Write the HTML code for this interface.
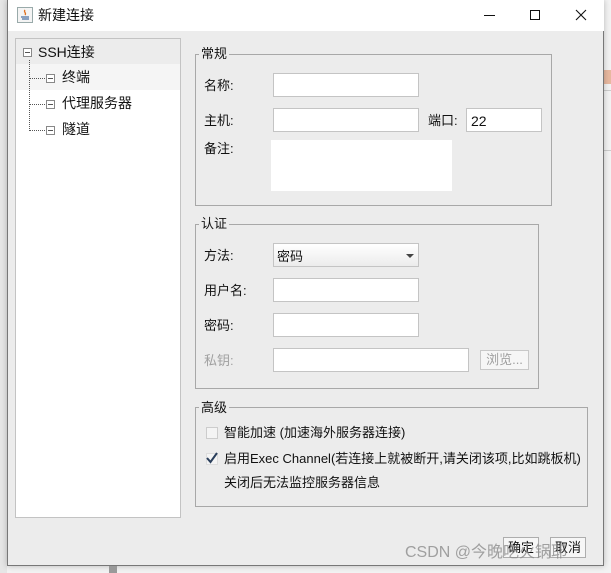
<!DOCTYPE html>
<html><head><meta charset="utf-8"><style>
*{margin:0;padding:0;box-sizing:border-box}
body{width:611px;height:573px;background:#f3f3f3;position:relative;overflow:hidden;font-family:"Liberation Sans","Microsoft YaHei","Noto Sans CJK SC",sans-serif;font-size:13px;color:#111}
.a{position:absolute}
#dlg{left:7px;top:0;width:597px;height:566px;background:#ececec;border:1px solid #777;border-top:none;box-shadow:0 0 6px rgba(0,0,0,.25)}
#tb{left:0;top:0;width:596px;height:31px;background:#fff}
.in{position:absolute;background:#fff;border:1px solid #c4c4c4}
.grp{position:absolute;border:1px solid #a8a8a8}
.gt{position:absolute;background:#ececec;padding:0 2px;font-size:13px;line-height:14px}
.lb{position:absolute;font-size:13px;line-height:14px}
.btn{position:absolute;border:1px solid #adadad;background:#f6f6f6;font-size:13px;text-align:center;line-height:19px}
.box{position:absolute;width:9px;height:9px;border:1px solid #888;background:#fff}
.box:after{content:"";position:absolute;left:1px;top:3px;width:5px;height:1px;background:#555}
</style></head><body>
<div class="a" style="left:0;top:0;width:7px;height:573px;background:#e6e6e6"></div>
<div class="a" style="left:604px;top:90px;width:7px;height:1px;background:#ccc"></div>
<div class="a" style="left:604px;top:150px;width:7px;height:1px;background:#ccc"></div>
<div class="a" style="left:604px;top:70px;width:7px;height:14px;background:#e8b9a0"></div>
<div id="dlg" class="a">
 <div id="tb" class="a">
  <svg class="a" style="left:9px;top:7px" width="16" height="16"><rect x="0.5" y="0.5" width="15" height="15" fill="#f4f4f4" stroke="#9aa"/><path d="M5 12h7M4 10h8" stroke="#4a6fa0" stroke-width="1.2"/><path d="M8 3c-2 2 2 3 0 5" stroke="#e07020" fill="none" stroke-width="1.3"/></svg>
  <div class="lb" style="left:30px;top:8px;font-size:14px">新建连接</div>
  <div class="a" style="left:476px;top:15px;width:11px;height:1px;background:#111"></div>
  <div class="a" style="left:522px;top:10px;width:10px;height:10px;border:1px solid #111"></div>
  <svg class="a" style="left:567px;top:9px" width="12" height="12"><path d="M1 1L11 11M11 1L1 11" stroke="#111" stroke-width="1.1"/></svg>
 </div>
</div>
<div class="a" style="left:15px;top:38px;width:166px;height:480px;background:#fff;border:1px solid #c3c3c3"></div>
<div class="a" style="left:16px;top:39px;width:164px;height:25px;background:#ececec"></div>
<div class="a" style="left:16px;top:64px;width:164px;height:26px;background:#f5f5f5"></div>
<div class="box" style="left:23px;top:48px"></div>
<div class="lb" style="left:38px;top:45px;font-size:14px">SSH连接</div>
<div class="a" style="left:29px;top:60px;height:71px;border-left:1px dotted #555"></div>
<div class="a" style="left:29px;top:78px;width:16px;border-top:1px dotted #555"></div>
<div class="a" style="left:29px;top:104px;width:16px;border-top:1px dotted #555"></div>
<div class="a" style="left:29px;top:130px;width:16px;border-top:1px dotted #555"></div>
<div class="box" style="left:46px;top:74px"></div>
<div class="box" style="left:46px;top:100px"></div>
<div class="box" style="left:46px;top:126px"></div>
<div class="lb" style="left:62px;top:70px;font-size:14px">终端</div>
<div class="lb" style="left:62px;top:96px;font-size:14px">代理服务器</div>
<div class="lb" style="left:62px;top:122px;font-size:14px">隧道</div>
<div class="grp" style="left:195px;top:54px;width:357px;height:152px"></div>
<div class="gt" style="left:199px;top:47px">常规</div>
<div class="lb" style="left:204px;top:79px">名称:</div>
<div class="in" style="left:273px;top:73px;width:146px;height:24px"></div>
<div class="lb" style="left:204px;top:114px">主机:</div>
<div class="in" style="left:273px;top:108px;width:146px;height:24px"></div>
<div class="lb" style="left:428px;top:114px">端口:</div>
<div class="in" style="left:466px;top:108px;width:76px;height:24px;padding:4px 0 0 4px;font-size:14px">22</div>
<div class="lb" style="left:204px;top:142px">备注:</div>
<div class="a" style="left:271px;top:140px;width:181px;height:51px;background:#fff"></div>
<div class="grp" style="left:195px;top:224px;width:344px;height:165px"></div>
<div class="gt" style="left:199px;top:217px">认证</div>
<div class="lb" style="left:204px;top:249px">方法:</div>
<div class="in" style="left:273px;top:243px;width:146px;height:24px;background:linear-gradient(#fff,#ececec);padding:2px 0 0 3px">密码<div class="a" style="right:4px;top:10px;border:4px solid transparent;border-top:4px solid #444;border-bottom:none"></div></div>
<div class="lb" style="left:204px;top:284px">用户名:</div>
<div class="in" style="left:273px;top:278px;width:146px;height:24px"></div>
<div class="lb" style="left:204px;top:319px">密码:</div>
<div class="in" style="left:273px;top:313px;width:146px;height:24px"></div>
<div class="lb" style="left:204px;top:354px;color:#a0a0a0">私钥:</div>
<div class="in" style="left:273px;top:348px;width:196px;height:24px"></div>
<div class="btn" style="left:480px;top:350px;width:49px;height:20px;color:#a0a0a0;border-color:#c8c8c8;line-height:18px">浏览...</div>
<div class="grp" style="left:195px;top:407px;width:393px;height:100px"></div>
<div class="gt" style="left:199px;top:401px">高级</div>
<div class="a" style="left:206px;top:427px;width:12px;height:12px;border:1px solid #ccc;background:#f4f4f4"></div>
<div class="lb" style="left:224px;top:426px">智能加速 (加速海外服务器连接)</div>
<div class="a" style="left:206px;top:453px;width:12px;height:12px;border:1px solid #ddd;background:#f4f4f4"></div>
<svg class="a" style="left:204px;top:450px" width="16" height="16"><path d="M3 8l3.5 4L13 3" stroke="#2b3f5c" stroke-width="2" fill="none"/></svg>
<div class="lb" style="left:224px;top:452px">启用Exec Channel(若连接上就被断开,请关闭该项,比如跳板机)</div>
<div class="lb" style="left:224px;top:476px">关闭后无法监控服务器信息</div>
<div class="btn" style="left:503px;top:537px;width:36px;height:21px">确定</div>
<div class="btn" style="left:550px;top:537px;width:36px;height:21px">取消</div>
<div class="lb" style="left:405px;top:544px;font-size:16px;line-height:18px;color:rgba(140,140,140,.8)">CSDN @今晚吃火锅耶</div>
<div class="a" style="left:109px;top:566px;width:8px;height:7px;background:#999"></div>
</body></html>
